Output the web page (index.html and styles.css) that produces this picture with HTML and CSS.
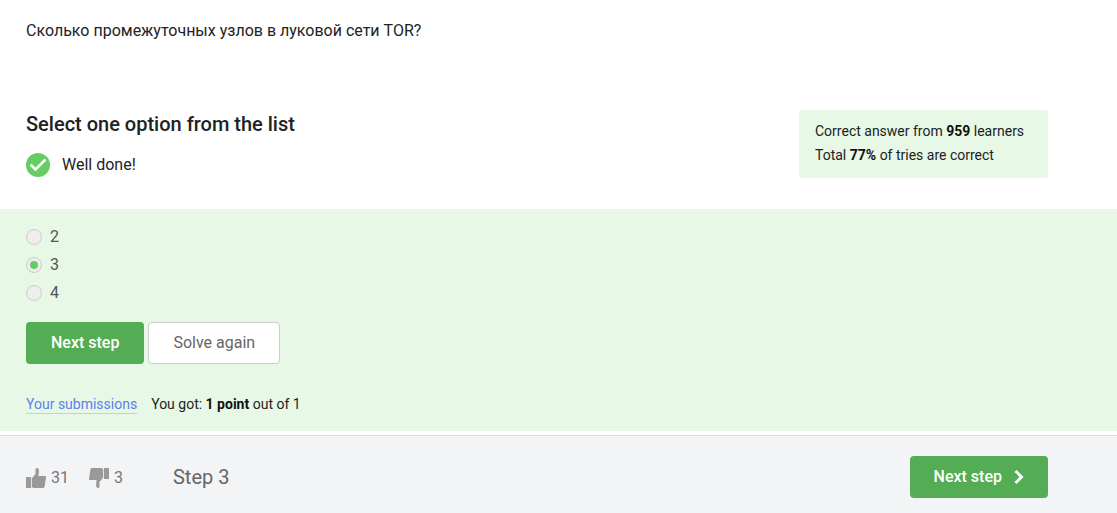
FILE: index.html
```html
<!DOCTYPE html>
<html lang="en">
<head>
<meta charset="utf-8">
<meta name="viewport" content="width=device-width, initial-scale=1">
<title>Step 3</title>
<link rel="stylesheet" href="styles.css">
</head>
<body>
<main>
  <p class="question" lang="ru">Сколько промежуточных узлов в луковой сети TOR?</p>
  <section class="summary">
    <div>
      <h2 class="title" id="quiz-title">Select one option from the list</h2>
      <p class="status">
        <svg class="status-icon" viewBox="0 0 24 24" aria-hidden="true"><circle cx="12" cy="12" r="12" fill="#66cc66"/><path d="M4.500 11.500l5 5L19.500 6.500" fill="none" stroke="#fff" stroke-width="2.500"/></svg>
        <span>Well done!</span>
      </p>
    </div>
    <aside class="stats">
      <p>Correct answer from <b>959</b> learners</p>
      <p>Total <b>77%</b> of tries are correct</p>
    </aside>
  </section>
  <form class="attempt" aria-labelledby="quiz-title">
    <div class="options">
      <label class="option"><input type="radio" name="answer" disabled><span>2</span></label>
      <label class="option"><input type="radio" name="answer" checked disabled><span>3</span></label>
      <label class="option"><input type="radio" name="answer" disabled><span>4</span></label>
    </div>
    <div class="actions">
      <button class="button primary" type="button">Next step</button>
      <button class="button outline" type="button">Solve again</button>
    </div>
    <p class="result"><a href="#submissions">Your submissions</a><span>You got: <b>1 point</b> out of 1</span></p>
  </form>
</main>
<footer class="footer">
  <div class="votes">
    <button class="vote" type="button" aria-label="Like, 31"><svg viewBox="0 0 20 20" aria-hidden="true"><path d="M.5 9H5v11H.5Q0 20 0 19.500v-10Q0 9 .5 9zM5.800 10.500L9.500 6V1.200Q9.700 0 11 0q2 .3 2 2.500L12.500 8H19q1.200 0 1 1.200L18.500 19q-.3 1-1.500 1H7.500L5.800 19z"/></svg>31</button>
    <button class="vote" type="button" aria-label="Dislike, 3"><svg class="down" viewBox="0 0 20 20" aria-hidden="true"><path d="M.5 9H5v11H.5Q0 20 0 19.500v-10Q0 9 .5 9zM5.800 10.500L9.500 6V1.200Q9.700 0 11 0q2 .3 2 2.500L12.500 8H19q1.200 0 1 1.200L18.500 19q-.3 1-1.500 1H7.500L5.800 19z"/></svg>3</button>
  </div>
  <span class="step">Step 3</span>
  <button class="button primary next" type="button">Next step<svg viewBox="0 0 10 16" aria-hidden="true"><path d="M1.500 2L7.500 8l-6 6" fill="none" stroke="#fff" stroke-width="3"/></svg></button>
</footer>
</body>
</html>
```
FILE: styles.css
```css
* { box-sizing: border-box; }
body { margin: 0; background: #fff; color: #222; font: 16px/24px Roboto, sans-serif; }
p, h2 { margin: 0; }
b { font-weight: 500; }
button { font: inherit; cursor: pointer; }
.question { padding: 19px 26px 0; }
.summary { display: flex; justify-content: space-between; align-items: flex-start; padding: 67px 69px 31px 26px; }
.title { font-size: 20px; line-height: 28px; font-weight: 500; }
.status { display: flex; align-items: center; gap: 12px; margin-top: 15px; }
.status-icon { width: 24px; height: 24px; }
.stats { min-width: 249px; padding: 9px 16px 11px; border-radius: 3px; background: #e7f8e6; font-size: 14px; }
.stats b, .result b { color: #111; font-weight: 700; }
.attempt { padding: 16px 26px 15px; background: #e7f8e6; }
.options { display: grid; gap: 4px; justify-items: start; }
.option { display: flex; align-items: center; gap: 8px; color: #555; }
.option input { appearance: none; display: grid; place-content: center; width: 16px; height: 16px; margin: 0; border: 1px solid #ccc; border-radius: 50%; background: #eee; }
.option input:checked::before { content: ""; width: 8px; height: 8px; border-radius: 50%; background: #66cc66; }
.actions { display: flex; gap: 4px; margin-top: 17px; }
.button { height: 42px; padding: 0 24px; border: 1px solid transparent; border-radius: 4px; }
.primary { border: 0; background: #54ad54; color: #fff; font-weight: 500; }
.actions .primary { padding: 0 25px; }
.outline { border-color: #ccc; background: #fff; color: #666; }
.result { display: flex; gap: 14px; margin-top: 28px; font-size: 14px; }
.result a { color: #5c7fec; text-decoration: underline 1px #bdd0ee; text-underline-offset: 4px; }
.footer { display: flex; align-items: center; margin-top: 4px; padding: 20px 69px 15px 26px; border-top: 1px solid #d8dcdb; background: #f3f4f6; color: #666; }
.votes { display: flex; gap: 20px; margin-top: 2px; }
.vote { display: flex; align-items: center; gap: 5px; padding: 0; border: 0; background: none; color: #777; }
.vote svg { width: 20px; height: 20px; fill: #999; }
.vote .down { transform: rotate(180deg); }
.step { margin-left: 50px; font-size: 20px; }
.next { display: flex; align-items: center; gap: 12px; margin-left: auto; }
.next svg { width: 10px; height: 16px; }
```
